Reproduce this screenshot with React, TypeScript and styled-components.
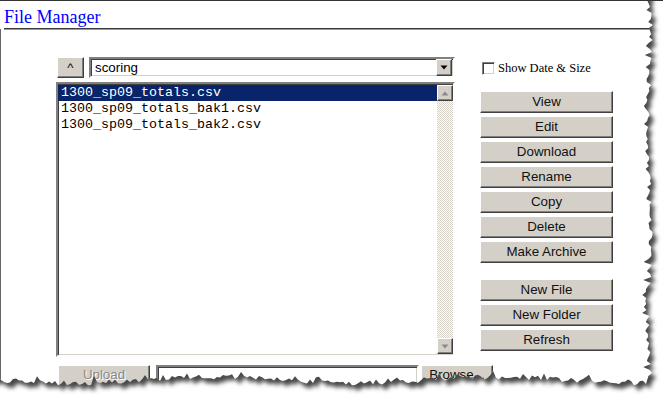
import React from "react";
import styled, { createGlobalStyle } from "styled-components";

const GlobalStyle = createGlobalStyle`
  html, body {
    margin: 0;
    padding: 0;
    background: #ffffff;
  }
  * {
    box-sizing: border-box;
  }
`;

const face = "#d4d0c8";

const Paper = styled.div`
  position: relative;
  width: 663px;
  height: 399px;
  overflow: hidden;
  background: #fff;
  border-top: 1px solid #333;
`;

const Header = styled.div`
  margin-left: 4px;
  padding-top: 6px;
  line-height: 20px;
  border-bottom: 1px solid #3a3a3a;
  box-shadow: 0 1px 0 #9a9a9a;
`;

const Title = styled.span`
  font-family: "Liberation Serif", serif;
  font-size: 18px;
  color: #0000ff;
`;

const Body = styled.div`
  display: flex;
  gap: 25px;
  height: 360px;
  padding: 28px 0 0 55px;
  border-left: 1px solid #666;
`;

const LeftCol = styled.div`
  display: flex;
  flex-direction: column;
  width: 399px;
`;

const PathRow = styled.div`
  display: flex;
  gap: 5px;
  height: 21px;
  padding-left: 1px;
`;

const RaisedButton = styled.button<{ $w?: number; $h?: number; $lift?: number }>`
  flex: none;
  width: ${(p) => (p.$w ? `${p.$w}px` : "100%")};
  height: ${(p) => p.$h ?? 22}px;
  padding: 0 0 ${(p) => p.$lift ?? 0}px 0;
  background: ${face};
  border: 1px solid;
  border-color: #ffffff #404040 #404040 #ffffff;
  box-shadow: inset -1px -1px 0 #808080;
  font-family: "Liberation Sans", Arial, sans-serif;
  font-size: 13.33px;
  font-weight: 400;
  color: ${(p) => (p.disabled ? "#8a8a8a" : "#111")};
  text-shadow: ${(p) => (p.disabled ? "1px 1px 0 #fff" : "none")};
  line-height: 18px;
  cursor: default;
`;

const Sunken = styled.div`
  border: 2px solid;
  border-color: #808080 #ffffff #ffffff #808080;
  box-shadow: inset 1px 1px 0 #404040, inset -1px -1px 0 ${face};
  background: #fff;
`;

const SelectBox = styled(Sunken)`
  flex: 1;
  display: flex;
  align-items: center;
  justify-content: space-between;
  padding: 0 1px 0 4px;
  font-family: "Liberation Sans", Arial, sans-serif;
  font-size: 13.33px;
  color: #000;
`;

const ArrowButton = styled.div<{ $h?: number }>`
  width: 16px;
  height: ${(p) => p.$h ?? 16}px;
  display: flex;
  align-items: center;
  justify-content: center;
  background: ${face};
  border: 1px solid;
  border-color: #ffffff #404040 #404040 #ffffff;
  box-shadow: inset -1px -1px 0 #808080;
`;

const ListBox = styled(Sunken)`
  margin-top: 4px;
  height: 277px;
  display: flex;
  padding: 1px 0 1px 0;
`;

const Rows = styled.div`
  flex: 1;
  display: flex;
  flex-direction: column;
`;

const Row = styled.div<{ $selected?: boolean }>`
  height: 16px;
  line-height: 16px;
  padding-left: 3px;
  font-family: "Liberation Mono", "Courier New", monospace;
  font-size: 13.33px;
  color: ${(p) => (p.$selected ? "#fff" : "#000")};
  background: ${(p) => (p.$selected ? "#0a246a" : "transparent")};
  white-space: pre;
`;

const ScrollBar = styled.div`
  width: 16px;
  display: flex;
  flex-direction: column;
  justify-content: space-between;
  background: repeating-conic-gradient(#ffffff 0 25%, ${face} 0 50%) 0 0 / 2px 2px;
`;

const UploadRow = styled.div`
  display: flex;
  align-items: flex-start;
  margin-top: 8px;
  padding-left: 2px;
  height: 24px;
`;

const FileInput = styled(Sunken)`
  flex: none;
  width: 263px;
  height: 24px;
  margin: 0 2px 0 6px;
`;

const RightCol = styled.div`
  display: flex;
  flex-direction: column;
  width: 133px;
`;

const CheckRow = styled.label`
  display: flex;
  align-items: center;
  gap: 3px;
  height: 13px;
  margin: 5px 0 0 2px;
  font-family: "Liberation Serif", serif;
  font-size: 12.5px;
  color: #000;
  white-space: nowrap;
`;

const CheckBox = styled.span`
  width: 13px;
  height: 13px;
  flex: none;
  background: #fff;
  border: 1px solid;
  border-color: #808080 #ffffff #ffffff #808080;
  box-shadow: inset 1px 1px 0 #404040, inset -1px -1px 0 ${face};
`;

const ButtonGroup = styled.div<{ $top: number }>`
  display: flex;
  flex-direction: column;
  gap: 3px;
  margin-top: ${(p) => p.$top}px;
`;

const Triangle = ({ down, color }: { down?: boolean; color: string }) => (
  <svg width="8" height="5" viewBox="0 0 8 5">
    <polygon
      points={down ? "0.5,0.5 7.5,0.5 4,4.5" : "0.5,4.5 7.5,4.5 4,0.5"}
      fill={color}
    />
  </svg>
);

// torn paper edge with its drop shadow, drawn over the page
function mulberry32(a: number) {
  return () => {
    a |= 0;
    a = (a + 0x6d2b79f5) | 0;
    let t = Math.imul(a ^ (a >>> 15), 1 | a);
    t = (t + Math.imul(t ^ (t >>> 7), 61 | t)) ^ t;
    return ((t ^ (t >>> 14)) >>> 0) / 4294967296;
  };
}

const buildPaperPath = () => {
  const rand = mulberry32(11);
  const pts: string[] = ["-20,-20"];
  for (let y = -20; y <= 378; y += 3) {
    const spike = rand() < 0.14 ? -rand() * 6 : 0;
    const x = 649 + Math.sin(y / 29) * 2 + (rand() - 0.5) * 5 + spike;
    pts.push(`${x.toFixed(1)},${y}`);
  }
  for (let x = 646; x >= -20; x -= 3) {
    const spike = rand() < 0.12 ? -rand() * 7 : 0;
    const y = 380 + Math.sin(x / 45) * 3 + (rand() - 0.5) * 5 + spike;
    pts.push(`${x},${y.toFixed(1)}`);
  }
  return "M" + pts.join(" L") + " Z";
};

const paperPath = buildPaperPath();
const outerRect = "M-50,-50 H720 V460 H-50 Z";

const EdgeSvg = styled.svg`
  position: absolute;
  top: -1px;
  left: 0;
  pointer-events: none;
`;

const TornEdge = () => (
  <EdgeSvg width="663" height="400" viewBox="0 0 663 400">
    <defs>
      <filter id="shadowBlur" x="-10%" y="-10%" width="120%" height="120%">
        <feGaussianBlur stdDeviation="2.2" />
      </filter>
      <clipPath id="outside">
        <path d={outerRect + " " + paperPath} clipRule="evenodd" />
      </clipPath>
    </defs>
    <path d={outerRect + " " + paperPath} fill="#fff" fillRule="evenodd" />
    <g clipPath="url(#outside)">
      <path
        d={paperPath}
        transform="translate(4,5)"
        fill="#4a4a4a"
        filter="url(#shadowBlur)"
      />
    </g>
  </EdgeSvg>
);

const files = [
  "1300_sp09_totals.csv",
  "1300_sp09_totals_bak1.csv",
  "1300_sp09_totals_bak2.csv",
];

const actions = ["View", "Edit", "Download", "Rename", "Copy", "Delete", "Make Archive"];
const creates = ["New File", "New Folder", "Refresh"];

export default function App() {
  return (
    <Paper>
      <GlobalStyle />
      <Header>
        <Title>File Manager</Title>
      </Header>
      <Body>
        <LeftCol>
          <PathRow>
            <RaisedButton $w={27} $h={21}>
              ^
            </RaisedButton>
            <SelectBox>
              <span>scoring</span>
              <ArrowButton $h={17}>
                <Triangle down color="#000" />
              </ArrowButton>
            </SelectBox>
          </PathRow>
          <ListBox>
            <Rows>
              {files.map((f, i) => (
                <Row key={f} $selected={i === 0}>
                  {f}
                </Row>
              ))}
            </Rows>
            <ScrollBar>
              <ArrowButton>
                <Triangle color="#8a8a8a" />
              </ArrowButton>
              <ArrowButton>
                <Triangle down color="#8a8a8a" />
              </ArrowButton>
            </ScrollBar>
          </ListBox>
          <UploadRow>
            <RaisedButton $w={92} $h={24} $lift={4} disabled>
              Upload
            </RaisedButton>
            <FileInput />
            <RaisedButton $w={72} $h={24} $lift={4}>
              Browse...
            </RaisedButton>
          </UploadRow>
        </LeftCol>
        <RightCol>
          <CheckRow>
            <CheckBox />
            Show Date &amp; Size
          </CheckRow>
          <ButtonGroup $top={16}>
            {actions.map((a) => (
              <RaisedButton key={a}>{a}</RaisedButton>
            ))}
          </ButtonGroup>
          <ButtonGroup $top={16}>
            {creates.map((a) => (
              <RaisedButton key={a}>{a}</RaisedButton>
            ))}
          </ButtonGroup>
        </RightCol>
      </Body>
      <TornEdge />
    </Paper>
  );
}
